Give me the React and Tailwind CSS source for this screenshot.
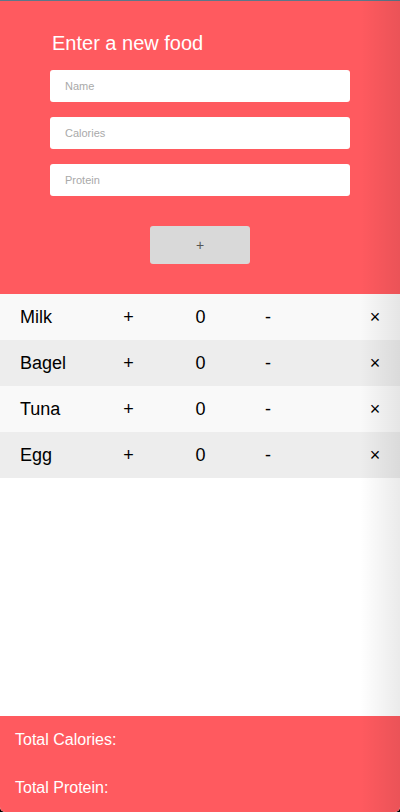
import React, { useState } from 'react';

const foods = ['Milk', 'Bagel', 'Tuna', 'Egg'];

function FoodRow({ name, index }) {
  const [count, setCount] = useState(0);
  return (
    <div className={`flex items-center h-[46px] pl-[20px] text-[18px] text-black ${index % 2 === 0 ? 'bg-[#f9f9f9]' : 'bg-[#ededed]'}`}>
      <span className="w-[88px]">{name}</span>
      <button className="w-[41px] text-center" onClick={() => setCount(count + 1)}>+</button>
      <span className="w-[103px] text-center">{count}</span>
      <button className="w-[32px] text-center" onClick={() => setCount(Math.max(0, count - 1))}>-</button>
      <span className="flex-1" />
      <button className="w-[20px] mr-[15px] text-center">×</button>
    </div>
  );
}

export default function App() {
  return (
    <div className="bg-black" style={{ fontFamily: '"Liberation Sans", Arial, sans-serif' }}>
      <div className="relative flex flex-col min-h-screen h-[812px] bg-white rounded-b-[5px] overflow-hidden">
        <div className="h-px bg-[#5d7789]" />
        <div className="bg-[#ff5a5f] pt-[30px] pb-[30px] flex flex-col items-center">
          <h2 className="w-[300px] pl-[2px] text-[20px] leading-[24px] text-white">Enter a new food</h2>
          <div className="mt-[15px] flex flex-col gap-[15px]">
            {['Name', 'Calories', 'Protein'].map((p) => (
              <input
                key={p}
                placeholder={p}
                className="w-[300px] h-[32px] bg-white rounded-[3px] px-[15px] text-[11px] text-black placeholder:text-[#a9a9a9] outline-none"
              />
            ))}
          </div>
          <button className="mt-[30px] w-[100px] h-[38px] bg-[#d9d9d9] rounded-[3px] text-[14px] text-[#555]">+</button>
        </div>
        <div>
          {foods.map((f, i) => (
            <FoodRow key={f} name={f} index={i} />
          ))}
        </div>
        <div className="flex-1" />
        <div className="bg-[#ff5a5f] text-white text-[16px]">
          <div className="h-[48px] flex items-center px-[15px]">Total Calories:</div>
          <div className="h-[48px] flex items-center px-[15px]">Total Protein:</div>
        </div>
        <div className="pointer-events-none absolute top-0 bottom-0 right-0 w-[40px] bg-gradient-to-l from-black/[0.08] to-transparent" />
      </div>
    </div>
  );
}
